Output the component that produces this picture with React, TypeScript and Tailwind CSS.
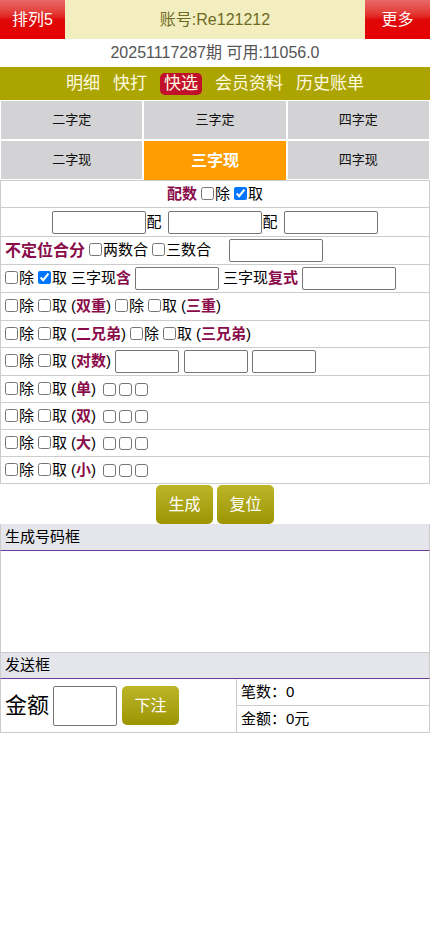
import React from 'react';

const font = { fontFamily: '"Liberation Sans", "Noto Sans CJK SC", sans-serif' };

function Cb({ checked = false }: { checked?: boolean }) {
  return (
    <input
      type="checkbox"
      defaultChecked={checked}
      className="w-[13px] h-[13px] m-0 mr-[1px] align-[-1px]"
    />
  );
}

function Box({ w }: { w: string }) {
  return <input type="text" className={`${w} h-[23px] border border-[#767676] rounded-[2px] bg-white align-middle`} />;
}

function Mark({ children }: { children: React.ReactNode }) {
  return <span className="text-[#8a0b4a] font-bold">{children}</span>;
}

function Row({ children, center = false, h = 'h-[27px]' }: { children: React.ReactNode; center?: boolean; h?: string }) {
  return (
    <div className={`${h} border-b border-[#cccccc] flex items-center gap-[4px] px-[4px] ${center ? 'justify-center' : ''}`}>
      {children}
    </div>
  );
}

function Pair() {
  return (
    <>
      <span className="whitespace-nowrap"><Cb />除</span>
      <span className="whitespace-nowrap"><Cb />取</span>
    </>
  );
}

function BigBoxes() {
  return (
    <span className="flex gap-[3px] ml-[3px]">
      <span className="w-[13px] h-[13px] border border-[#767676] rounded-[3px] bg-white" />
      <span className="w-[13px] h-[13px] border border-[#767676] rounded-[3px] bg-white" />
      <span className="w-[13px] h-[13px] border border-[#767676] rounded-[3px] bg-white" />
    </span>
  );
}

export default function App() {
  const tabs = ['二字定', '三字定', '四字定', '二字现', '三字现', '四字现'];
  return (
    <div className="w-[430px] min-h-[932px] bg-white text-black" style={font}>
      {/* 顶部 */}
      <div className="h-[39px] flex">
        <div className="w-[65px] flex items-center justify-center text-white text-[16px] bg-gradient-to-b from-[#e86868] via-[#e00808] to-[#e60000]">排列5</div>
        <div className="flex-1 flex items-center justify-center bg-[#f2eec0] text-[#6e6a22] text-[16px]">账号:Re121212</div>
        <div className="w-[65px] flex items-center justify-center text-white text-[16px] bg-gradient-to-b from-[#e86868] via-[#e00808] to-[#e60000]">更多</div>
      </div>
      <div className="h-[28px] flex items-center justify-center text-[16px] text-[#555555]">20251117287期 可用:11056.0</div>
      <div className="h-[33px] bg-[#aca400] flex items-center justify-center gap-[13px] text-[17px] text-[#fffbe0]">
        <span>明细</span>
        <span>快打</span>
        <span className="bg-[#c0102c] rounded-[5px] px-[4px] leading-[22px]">快选</span>
        <span>会员资料</span>
        <span>历史账单</span>
      </div>

      {/* 玩法 */}
      <div className="grid grid-cols-3 gap-[2px] p-[1px] pb-0">
        {tabs.map((t) => (
          <div
            key={t}
            className={
              t === '三字现'
                ? 'h-[39px] flex items-center justify-center bg-[#ff9c00] text-white font-bold text-[16px]'
                : 'h-[38px] flex items-center justify-center bg-[#d3d2d4] text-[13px] text-[#111111]'
            }
          >
            {t}
          </div>
        ))}
      </div>

      {/* 选号表 */}
      <div className="border-x border-t border-[#cccccc] text-[15px]">
        <Row center>
          <Mark>配数</Mark>
          <span className="whitespace-nowrap"><Cb />除</span>
          <span className="whitespace-nowrap"><Cb checked />取</span>
        </Row>
        <Row center h="h-[29px]">
          <span className="flex items-center gap-0">
            <Box w="w-[94px]" />配<Box w="w-[94px] ml-[6px]" /><span className="ml-[1px]">配</span><Box w="w-[94px] ml-[6px]" />
          </span>
        </Row>
        <Row h="h-[28px]">
          <span className="text-[16px]"><Mark>不定位合分</Mark></span>
          <span className="whitespace-nowrap"><Cb />两数合</span>
          <span className="whitespace-nowrap"><Cb />三数合</span>
          <Box w="w-[94px] ml-[14px]" />
        </Row>
        <Row h="h-[28px]">
          <span className="whitespace-nowrap"><Cb />除</span>
          <span className="whitespace-nowrap"><Cb checked />取</span>
          <span>三字现<Mark>含</Mark></span>
          <Box w="w-[84px]" />
          <span>三字现<Mark>复式</Mark></span>
          <Box w="w-[94px]" />
        </Row>
        <Row h="h-[28px]">
          <Pair /><span>(<Mark>双重</Mark>)</span>
          <Pair /><span>(<Mark>三重</Mark>)</span>
        </Row>
        <Row>
          <Pair /><span>(<Mark>二兄弟</Mark>)</span>
          <Pair /><span>(<Mark>三兄弟</Mark>)</span>
        </Row>
        <Row h="h-[28px]">
          <Pair /><span>(<Mark>对数</Mark>)</span>
          <Box w="w-[64px]" />
          <Box w="w-[64px] ml-[1px]" />
          <Box w="w-[64px]" />
        </Row>
        <Row>
          <Pair /><span>(<Mark>单</Mark>)</span><BigBoxes />
        </Row>
        <Row>
          <Pair /><span>(<Mark>双</Mark>)</span><BigBoxes />
        </Row>
        <Row>
          <Pair /><span>(<Mark>大</Mark>)</span><BigBoxes />
        </Row>
        <Row>
          <Pair /><span>(<Mark>小</Mark>)</span><BigBoxes />
        </Row>
      </div>

      {/* 按钮 */}
      <div className="h-[40px] flex items-center justify-center gap-[4px] pt-[1px]">
        <button className="w-[57px] h-[39px] rounded-[5px] bg-gradient-to-b from-[#bcb526] to-[#9c9500] text-white text-[16px]">生成</button>
        <button className="w-[57px] h-[39px] rounded-[5px] bg-gradient-to-b from-[#bcb526] to-[#9c9500] text-white text-[16px]">复位</button>
      </div>

      <div className="h-[27px] bg-[#e4e6ec] border-x border-[#cccccc] border-b border-b-[#6a3d9a] flex items-center px-[4px] text-[15px]">生成号码框</div>
      <div className="h-[101px] border-x border-[#cccccc]" />
      <div className="h-[27px] bg-[#e4e6ec] border-x border-t border-[#cccccc] border-b border-b-[#6a3d9a] flex items-center px-[4px] text-[15px]">发送框</div>

      <div className="h-[54px] flex border-x border-b border-[#cccccc]">
        <div className="w-[236px] flex items-center gap-[4px] px-[4px] border-r border-[#cccccc]">
          <span className="text-[22px]">金额</span>
          <input type="text" className="w-[64px] h-[40px] border border-[#767676] rounded-[2px] bg-white" />
          <button className="w-[57px] h-[39px] ml-[1px] rounded-[5px] bg-gradient-to-b from-[#bcb526] to-[#9c9500] text-white text-[16px]">下注</button>
        </div>
        <div className="flex-1 flex flex-col text-[15px]">
          <div className="h-[27px] flex items-center px-[4px] border-b border-[#cccccc]">笔数：0</div>
          <div className="flex-1 flex items-center px-[4px]">金额：0元</div>
        </div>
      </div>
    </div>
  );
}
